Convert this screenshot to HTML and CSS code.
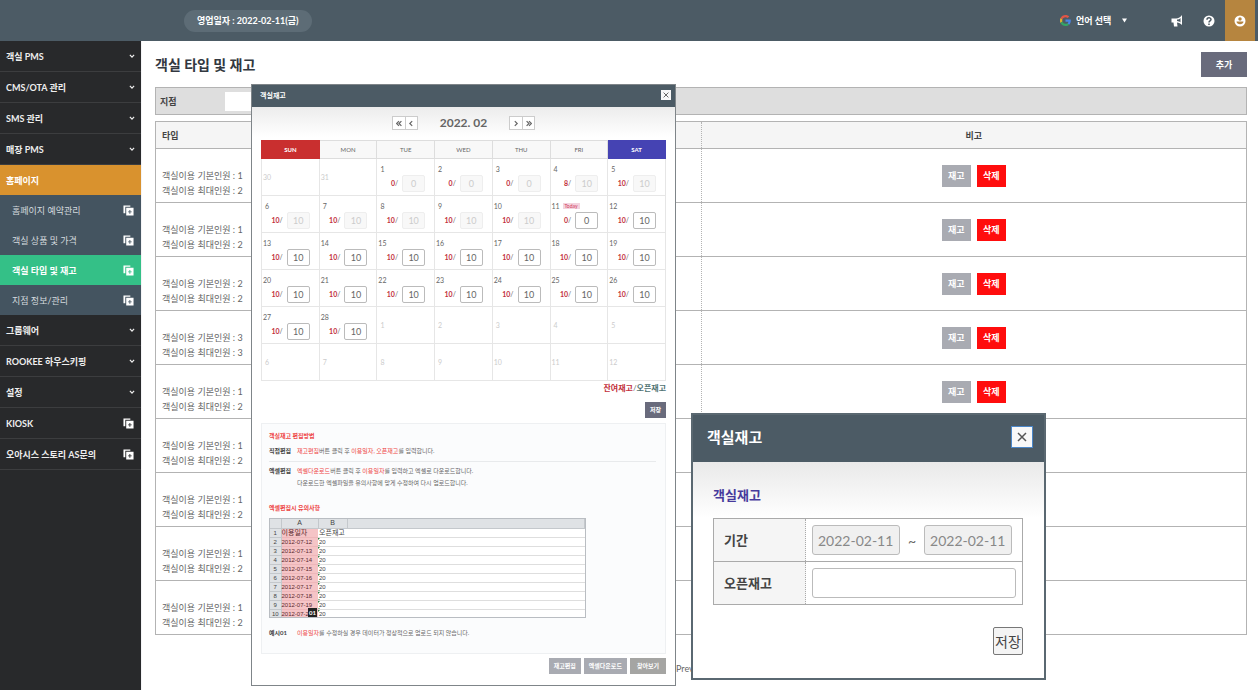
FILE: index.html
```html
<!DOCTYPE html>
<html lang="ko">
<head>
    <meta charset="UTF-8">
    <meta name="viewport" content="width=device-width, initial-scale=1.0">
    <title>객실 타입 및 재고</title>
    <link rel="stylesheet" href="styles.css">
</head>
<body>
    <svg width="0" height="0" class="defs">
        <symbol id="copy" viewBox="0 0 24 24">
            <path fill="currentColor" d="M1 1h15v3H5v14H1z"/>
            <path fill="currentColor" fill-rule="evenodd" d="M7 6h16v17H7zM14 11v3h-3v2h3v3h2v-3h3v-2h-3v-3z"/>
        </symbol>
        <symbol id="down" viewBox="0 0 10 10">
            <path fill="none" stroke="currentColor" stroke-width="2" d="M1.500 3l3.500 4 3.500-4"/>
        </symbol>
        <symbol id="left" viewBox="0 0 10 10">
            <path fill="none" stroke="currentColor" stroke-width="2" d="M7 1L3 5l4 4"/>
        </symbol>
        <symbol id="left2" viewBox="0 0 10 10">
            <path fill="none" stroke="currentColor" stroke-width="2" d="M5 1L1 5l4 4M9 1L5 5l4 4"/>
        </symbol>
        <symbol id="cross" viewBox="0 0 10 10">
            <path fill="none" stroke="currentColor" stroke-width="1.500" d="M1 1l8 8M9 1L1 9"/>
        </symbol>
    </svg>

    <header class="topbar">
        <span class="work-date">영업일자 : 2022-02-11(금)</span>
        <div class="top-menu">
            <div class="lang">
                <svg class="google" viewBox="0 0 48 48">
                    <path fill="#e15546" d="M24 9.500c3.500 0 6.700 1.200 9.200 3.600l6.900-6.900C35.900 2.400 30.500 0 24 0 14.600 0 6.500 5.400 2.600 13.200l8 6.200C12.400 13.700 17.700 9.500 24 9.500z"/>
                    <path fill="#4a86e8" d="M47 24.600c0-1.600-.2-3.100-.4-4.600H24v9h12.900c-.6 3-2.200 5.500-4.700 7.200l7.700 6C44.400 38 47 31.800 47 24.600z"/>
                    <path fill="#e0b030" d="M10.500 28.600A14.500 14.500 0 0 1 10.500 19.400l-8-6.200a24 24 0 0 0 0 21.600z"/>
                    <path fill="#35a566" d="M24 48c6.500 0 11.900-2.100 15.900-5.800l-7.700-6c-2.200 1.500-4.900 2.300-8.200 2.300-6.300 0-11.600-4.200-13.500-9.900l-8 6.200C6.500 42.600 14.600 48 24 48z"/>
                </svg>
                <select class="lang-select" aria-label="언어 선택">
                    <option>언어 선택</option>
                </select>
                <svg class="caret" viewBox="0 0 10 10"><path fill="#fff" d="M0 1h10L5 9z"/></svg>
            </div>
            <button class="icon-btn" aria-label="공지">
                <svg viewBox="0 0 24 24"><path fill="#fff" fill-rule="evenodd" d="M22 0v20c-3-3-6-5-10-5l1 8H6L5 15H1V7h9c5 0 9-3 12-7zM19 6c-2 2-4 3-7 3v3c3 .3 5 1 7 3z"/></svg>
            </button>
            <button class="icon-btn" aria-label="도움말">
                <svg viewBox="0 0 24 24"><circle cx="12" cy="12" r="11" fill="#fff"/><path fill="none" stroke="#4c5a64" stroke-width="3" d="M8 9.500c0-5 8-5 8-.5 0 3-4 2.500-4 6M12 17v3"/></svg>
            </button>
            <button class="icon-btn user" aria-label="내 정보">
                <svg viewBox="0 0 24 24"><circle cx="12" cy="12" r="11" fill="#fff"/><circle cx="12" cy="8" r="3.500" fill="#b6853f"/><path fill="#b6853f" d="M5 13h14c0 7-14 7-14 0z"/></svg>
            </button>
        </div>
    </header>

    <div class="layout">
        <nav class="sidebar">
            <a class="menu" href="#">객실 PMS<svg class="arrow"><use href="#down"/></svg></a>
            <a class="menu" href="#">CMS/OTA 관리<svg class="arrow"><use href="#down"/></svg></a>
            <a class="menu" href="#">SMS 관리<svg class="arrow"><use href="#down"/></svg></a>
            <a class="menu" href="#">매장 PMS<svg class="arrow"><use href="#down"/></svg></a>
            <a class="menu open" href="#">홈페이지</a>
            <a class="submenu" href="#">홈페이지 예약관리<svg class="copy"><use href="#copy"/></svg></a>
            <a class="submenu" href="#">객실 상품 및 가격<svg class="copy"><use href="#copy"/></svg></a>
            <a class="submenu active" href="#">객실 타입 및 재고<svg class="copy"><use href="#copy"/></svg></a>
            <a class="submenu" href="#">지점 정보/관리<svg class="copy"><use href="#copy"/></svg></a>
            <a class="menu" href="#">그룹웨어<svg class="arrow"><use href="#down"/></svg></a>
            <a class="menu" href="#">ROOKEE 하우스키핑<svg class="arrow"><use href="#down"/></svg></a>
            <a class="menu" href="#">설정<svg class="arrow"><use href="#down"/></svg></a>
            <a class="menu" href="#">KIOSK<svg class="copy"><use href="#copy"/></svg></a>
            <a class="menu" href="#">오아시스 스토리 AS문의<svg class="copy"><use href="#copy"/></svg></a>
        </nav>

        <main class="content">
            <div class="title-row">
                <h1>객실 타입 및 재고</h1>
                <button class="btn btn-add">추가</button>
            </div>
            <div class="search">
                <label for="branch">지점</label>
                <select id="branch"><option></option></select>
            </div>
            <table class="rooms">
                <thead>
                    <tr><th class="type">타입</th><th>비고</th></tr>
                </thead>
                <tbody></tbody>
            </table>
            <div class="pager"><a href="#">Prev</a></div>
        </main>
    </div>

    <section class="popup stock">
        <div class="popup-head">
            <h2>객실재고</h2>
            <button class="close" aria-label="닫기"><svg><use href="#cross"/></svg></button>
        </div>
        <div class="popup-body">
            <div class="month">
                <div class="month-btns">
                    <button aria-label="이전 해"><svg><use href="#left2"/></svg></button>
                    <button aria-label="이전 달"><svg><use href="#left"/></svg></button>
                </div>
                <strong>2022. 02</strong>
                <div class="month-btns next">
                    <button aria-label="다음 달"><svg><use href="#left"/></svg></button>
                    <button aria-label="다음 해"><svg><use href="#left2"/></svg></button>
                </div>
            </div>
            <table class="calendar">
                <thead>
                    <tr><th class="sun">SUN</th><th>MON</th><th>TUE</th><th>WED</th><th>THU</th><th>FRI</th><th class="sat">SAT</th></tr>
                </thead>
                <tbody></tbody>
            </table>
            <p class="legend"><b class="left-stock">잔여재고</b>/<b class="open-stock">오픈재고</b></p>
            <div class="actions"><button class="btn btn-save">저장</button></div>

            <div class="guide">
                <h3>객실재고 편집방법</h3>
                <dl>
                    <dt>직접편집</dt>
                    <dd><em>재고편집</em>버튼 클릭 후 <em>이용일자, 오픈재고</em>를 입력합니다.</dd>
                </dl>
                <dl class="line">
                    <dt>엑셀편집</dt>
                    <dd><em>엑셀다운로드</em>버튼 클릭 후 <em>이용일자</em>를 입력하고 엑셀로 다운로드합니다.<br>다운로드한 엑셀파일을 유의사항에 맞게 수정하여 다시 업로드합니다.</dd>
                </dl>
                <h3 class="notice">엑셀편집시 유의사항</h3>
                <div class="sheet-box">
                    <table class="sheet">
                        <thead><tr><th class="num"></th><th class="col-a">A</th><th class="col-b">B</th><th></th></tr></thead>
                        <tbody></tbody>
                    </table>
                    <span class="mark">01</span>
                </div>
                <dl>
                    <dt>예시01</dt>
                    <dd><em>이용일자</em>를 수정하실 경우 데이터가 정상적으로 업로드 되지 않습니다.</dd>
                </dl>
            </div>
            <div class="actions bottom">
                <button class="btn btn-gray">재고편집</button>
                <button class="btn btn-gray">엑셀다운로드</button>
                <button class="btn btn-gray find">찾아보기</button>
            </div>
        </div>
    </section>

    <section class="popup edit">
        <div class="popup-head">
            <h2>객실재고</h2>
            <button class="close" aria-label="닫기"><svg><use href="#cross"/></svg></button>
        </div>
        <div class="popup-body">
            <h3>객실재고</h3>
            <table class="form">
                <tr>
                    <th><label for="from">기간</label></th>
                    <td>
                        <div class="period">
                            <input id="from" type="text" value="2022-02-11" disabled>
                            <span>~</span>
                            <input type="text" value="2022-02-11" aria-label="종료일" disabled>
                        </div>
                    </td>
                </tr>
                <tr>
                    <th><label for="open">오픈재고</label></th>
                    <td><input id="open" type="text"></td>
                </tr>
            </table>
            <div class="actions"><button class="btn-line">저장</button></div>
        </div>
    </section>

    <script src="script.js"></script>
</body>
</html>
```

FILE: styles.css
```css
* {
    box-sizing: border-box;
}

body {
    margin: 0;
    min-height: 100vh;
    display: flex;
    flex-direction: column;
    position: relative;
    font-family: Lato, "Noto Sans CJK KR", sans-serif;
    font-size: 9px;
    line-height: 15px;
    color: #666;
    background: #fff;
}

h1, h2, h3, p, dl, dd {
    margin: 0;
}

a {
    color: inherit;
    text-decoration: none;
}

button, input, select {
    margin: 0;
    padding: 0;
    border: 0;
    font: inherit;
    color: inherit;
    background: none;
}

table {
    width: 100%;
    border-collapse: collapse;
}

em {
    font-style: normal;
    color: #ee4444;
}

.defs {
    position: absolute;
}

/* header */
.topbar {
    height: 41px;
    padding-right: 3px;
    display: flex;
    align-items: center;
    justify-content: space-between;
    color: #fff;
    background: #4c5b65;
}

.work-date {
    margin-left: 184px;
    padding: 0 13px;
    border-radius: 11px;
    line-height: 22px;
    font-weight: bold;
    background: #5d6c76;
}

.top-menu {
    height: 100%;
    display: flex;
    align-items: center;
}

.lang {
    display: flex;
    align-items: center;
    margin-right: 34px;
    font-weight: bold;
}

.google {
    width: 11px;
    height: 11px;
    margin-right: 5px;
}

.lang-select {
    width: 46px;
    appearance: none;
}

.caret {
    width: 5px;
    height: 5px;
}

.icon-btn {
    width: 32px;
    height: 100%;
    display: flex;
    align-items: center;
    justify-content: center;
}

.icon-btn svg {
    width: 12px;
    height: 12px;
}

.icon-btn.user {
    width: 30px;
    background: #b6853f;
}

/* side menu */
.layout {
    flex: 1;
    display: flex;
}

.sidebar {
    width: 141px;
    color: #eee;
    background: #28292b;
}

.menu, .submenu {
    display: flex;
    align-items: center;
    justify-content: space-between;
    height: 31px;
    padding: 0 6px;
    border-bottom: 1px solid #3c3d3f;
    font-weight: bold;
}

.menu.open {
    height: 30px;
    border: 0;
    color: #fff;
    background: #d9922e;
}

.submenu {
    height: 30px;
    padding-left: 12px;
    border: 0;
    font-weight: normal;
    color: #d5dbdf;
    background: #445460;
}

.submenu.active {
    color: #fff;
    font-weight: bold;
    background: #34c087;
}

.arrow {
    width: 6px;
    height: 6px;
}

.copy {
    width: 11px;
    height: 11px;
    margin-right: 1px;
    color: #fff;
}

/* room list */
.content {
    flex: 1;
    padding: 11px 11px 0 13px;
    border-left: 1px solid #f4f4f6;
}

.title-row {
    display: flex;
    align-items: center;
    justify-content: space-between;
    margin-bottom: 10px;
}

h1 {
    font-size: 14px;
    line-height: 25px;
    color: #333840;
}

.btn {
    font-weight: bold;
    color: #fff;
    background: #a9abb2;
}

.btn-add {
    width: 46px;
    height: 25px;
    background: #696b7c;
}

.search {
    display: flex;
    align-items: center;
    height: 28px;
    padding-left: 4px;
    margin-bottom: 6px;
    border: 1px solid #b3b3b3;
    background: #dedede;
}

.search label {
    width: 65px;
    font-weight: bold;
    color: #444;
}

.search select {
    width: 120px;
    height: 19px;
    background: #fff;
}

.rooms {
    border: 1px solid #b3b3b3;
    table-layout: fixed;
}

.rooms th {
    height: 27px;
    padding: 0;
    color: #444;
    background: #f5f5f5;
    border-bottom: 1px solid #b3b3b3;
}

.rooms .type {
    padding-left: 6px;
    text-align: left;
}

.rooms td {
    height: 54px;
    padding: 0 6px;
    text-align: center;
    border-bottom: 1px solid #b3b3b3;
}

.rooms td + td, .rooms th + th {
    border-left: 1px dotted #b3b3b3;
}

.rooms td:first-child {
    padding-top: 14px;
    text-align: left;
}

.rooms .btn {
    width: 29px;
    height: 22px;
}

.rooms .btn-del {
    background: #ff0d0d;
}

.row-btns {
    display: flex;
    justify-content: center;
    gap: 6px;
}

.pager {
    width: 50px;
    margin: 26px auto 0;
}

/* popups */
.popup {
    position: absolute;
    background: #fff;
}

.popup-head {
    display: flex;
    align-items: center;
    justify-content: space-between;
    color: #fff;
    background: #4c5b65;
}

.close {
    display: flex;
    align-items: center;
    justify-content: center;
    color: #555;
    background: #f8f8f8;
}

.actions {
    display: flex;
    justify-content: flex-end;
}

.stock {
    left: 251px;
    top: 84px;
    width: 425px;
    border: 1px solid #7f8589;
    font-size: 7px;
    line-height: 12px;
}

.stock .popup-head {
    height: 22px;
    padding: 0 4px 2px 8px;
}

.stock h2 {
    font-size: 7px;
}

.stock .close {
    width: 10px;
    height: 10px;
}

.stock .close svg {
    width: 6px;
    height: 6px;
}

.stock .popup-body {
    padding: 8px 9px 11px;
    background: linear-gradient(#ececec, #fff 30px);
}

.month {
    display: flex;
    align-items: center;
    justify-content: center;
    gap: 22px;
    height: 16px;
    margin-bottom: 9px;
}

.month strong {
    font-size: 12px;
}

.month-btns {
    display: flex;
    border: 1px solid #ccc;
    background: #fff;
}

.month-btns button {
    display: flex;
    align-items: center;
    justify-content: center;
    width: 12px;
    height: 12px;
}

.month-btns button + button {
    border-left: 1px solid #ccc;
}

.month-btns svg {
    width: 6px;
    height: 7px;
}

.next svg {
    transform: scaleX(-1);
}

.calendar {
    table-layout: fixed;
    background: #fff;
}

.calendar th {
    height: 18px;
    padding: 0;
    font-size: 6px;
    font-weight: normal;
    border: 1px solid #ddd;
    background: #f8f8f8;
}

.calendar .sun {
    color: #fff;
    font-weight: bold;
    background: #c92f2f;
    border-color: #c92f2f;
}

.calendar .sat {
    color: #fff;
    font-weight: bold;
    background: #4543b3;
    border-color: #4543b3;
}

.calendar td {
    height: 37px;
    padding: 0;
    border: 1px solid #e6e6e6;
}

.calendar .other {
    color: #ccc;
}

.day {
    display: flex;
    align-items: center;
}

.day-num {
    width: 10px;
    text-align: center;
}

.today {
    margin-left: 2px;
    padding: 0 2px;
    font-size: 5px;
    line-height: 6px;
    color: #d23a5c;
    background: #f3d3de;
}

.count {
    display: flex;
    align-items: center;
    justify-content: flex-end;
    gap: 4px;
    padding-right: 9px;
}

.count b, .left-stock {
    color: #c2303c;
}

.count input {
    width: 23px;
    height: 17px;
    border: 1px solid #bbb;
    border-radius: 2px;
    font-size: 9px;
    text-align: center;
    background: #fff;
}

.count input:disabled {
    color: #ccc;
    border-color: #eee;
    background: #f8f8f8;
}

.legend {
    margin-top: 1px;
    font-size: 8px;
    text-align: right;
}

.open-stock {
    color: #4f7272;
}

.stock .btn {
    height: 16px;
    padding: 0 5px;
    font-size: 6px;
}

.stock .btn-save {
    width: 21px;
    margin: 8px 0 5px;
    padding: 0;
    background: #696b7c;
}

.guide {
    padding: 6px 9px 10px 7px;
    border: 1px solid #eef0f2;
    font-size: 6px;
    background: #fbfcfd;
}

.guide h3 {
    font-size: 6px;
    color: #ee4444;
}

.guide dl {
    display: flex;
    padding: 3px 0 4px;
}

.guide .line {
    border-top: 1px solid #e8eaec;
}

.guide dt {
    width: 28px;
    font-weight: bold;
    color: #444;
}

.guide .notice {
    margin: 9px 0 4px;
}

.sheet-box {
    position: relative;
    width: 82%;
    height: 100px;
    margin-bottom: 6px;
    overflow: hidden;
    border: 1px solid #b9bdc2;
    background: #fff;
}

.sheet {
    table-layout: fixed;
    font-family: "Liberation Sans", "Noto Sans CJK KR", sans-serif;
    line-height: 8px;
    color: #444;
}

.sheet th {
    height: 9px;
    padding: 0;
    font-weight: normal;
    border: 1px solid #c4c8cc;
    border-width: 0 1px 1px 0;
    background: #dfe2e5;
}

.sheet thead th, .sheet .name {
    font-size: 7px;
}

.sheet td {
    height: 9px;
    padding: 0 0 0 1px;
    border-bottom: 1px solid #dedede;
}

.sheet .num {
    width: 11px;
    text-align: center;
}

.sheet .col-a {
    width: 37px;
}

.sheet .col-b {
    width: 29px;
}

.sheet .date {
    padding: 0;
    color: #5c2a2e;
    background: #f5c4c6;
    border-color: #edb6b9;
}

/* green corner of a number stored as text */
.sheet .text {
    background: linear-gradient(135deg, #2f7a3c 2px, transparent 2px);
}

.mark {
    position: absolute;
    left: 38px;
    bottom: 0;
    width: 9px;
    line-height: 9px;
    text-align: center;
    font-weight: bold;
    color: #fff;
    background: #222;
}

.bottom {
    gap: 3px;
    margin-top: 4px;
}

.stock .find {
    padding: 0 7px;
    background: #a5a5a3;
}

.edit {
    left: 691px;
    top: 413px;
    width: 355px;
    border: 2px solid #5a6871;
    font-size: 14px;
}

.edit .popup-head {
    height: 47px;
    padding: 0 11px 3px 14px;
}

.edit h2 {
    font-size: 15px;
}

.edit .close {
    width: 22px;
    height: 22px;
    border: 1px solid #4b87c9;
}

.edit .close svg {
    width: 10px;
    height: 10px;
}

.edit .popup-body {
    padding: 23px 21px 23px 20px;
    background: linear-gradient(#e9e9e9, #fff 56px);
}

.edit h3 {
    margin-bottom: 13px;
    font-size: 13px;
    line-height: 20px;
    color: #473a9c;
}

.form {
    border: 1px solid #aaa;
    background: #fff;
}

.form th {
    width: 92px;
    height: 43px;
    padding: 0 0 0 10px;
    font-size: 13px;
    text-align: left;
    color: #444;
    border-right: 1px dotted #aaa;
    background: #f5f5f5;
}

.form td {
    padding: 0 6px;
}

.form tr + tr {
    border-top: 1px solid #aaa;
}

.form input {
    width: 100%;
    height: 30px;
    padding: 0 5px;
    border: 1px solid #bbb;
    border-radius: 3px;
    background: #fff;
}

.form input:disabled {
    color: #888;
    background: #f0f0f0;
}

.period {
    display: flex;
    align-items: center;
    gap: 8px;
    padding-right: 4px;
}

.btn-line {
    width: 30px;
    height: 28px;
    margin-top: 22px;
    border: 1px solid #777;
    border-radius: 2px;
    color: #444;
    background: #f4f4f4;
}
```

FILE: script.js
```js
// standard / maximum guests per room type
const rooms = [[1, 2], [1, 2], [2, 2], [3, 3], [1, 2], [1, 2], [1, 2], [1, 2], [1, 2]];

document.querySelector('.rooms tbody').innerHTML = rooms.map(([base, max]) => `
    <tr>
        <td>객실이용 기본인원 : ${base}<br>객실이용 최대인원 : ${max}</td>
        <td><div class="row-btns"><button class="btn">재고</button><button class="btn btn-del">삭제</button></div></td>
    </tr>`).join('');

const today = 11;
const left = {1: 0, 2: 0, 3: 0, 4: 8, 11: 0};
const open = {1: 0, 2: 0, 3: 0, 11: 0};

function getCell(i) {
    const day = i - 1;
    if (day < 1) {
        return `<td class="other"><div class="day-num">${day + 31}</div></td>`;
    }
    if (day > 28) {
        return `<td class="other"><div class="day-num">${day - 28}</div></td>`;
    }
    return `<td>
        <div class="day"><span class="day-num">${day}</span>${day === today ? '<span class="today">Today</span>' : ''}</div>
        <div class="count"><span><b>${left[day] ?? 10}</b>/</span>
        <input type="text" aria-label="${day}일 오픈재고" value="${open[day] ?? 10}"${day < today ? ' disabled' : ''}></div>
    </td>`;
}

let weeks = '';
for (let w = 0; w < 6; w++) {
    weeks += '<tr>';
    for (let d = 0; d < 7; d++) {
        weeks += getCell(w * 7 + d);
    }
    weeks += '</tr>';
}
document.querySelector('.calendar tbody').innerHTML = weeks;

let lines = '<tr><th class="num">1</th><td class="date name">이용일자</td><td class="name">오픈재고</td><td></td></tr>';
for (let n = 2; n <= 10; n++) {
    lines += `<tr><th class="num">${n}</th><td class="date">2012-07-${n + 10}</td><td class="text">20</td><td></td></tr>`;
}
lines += '<tr><th class="num"></th><td class="date"></td><td></td><td></td></tr>';
document.querySelector('.sheet tbody').innerHTML = lines;
```
